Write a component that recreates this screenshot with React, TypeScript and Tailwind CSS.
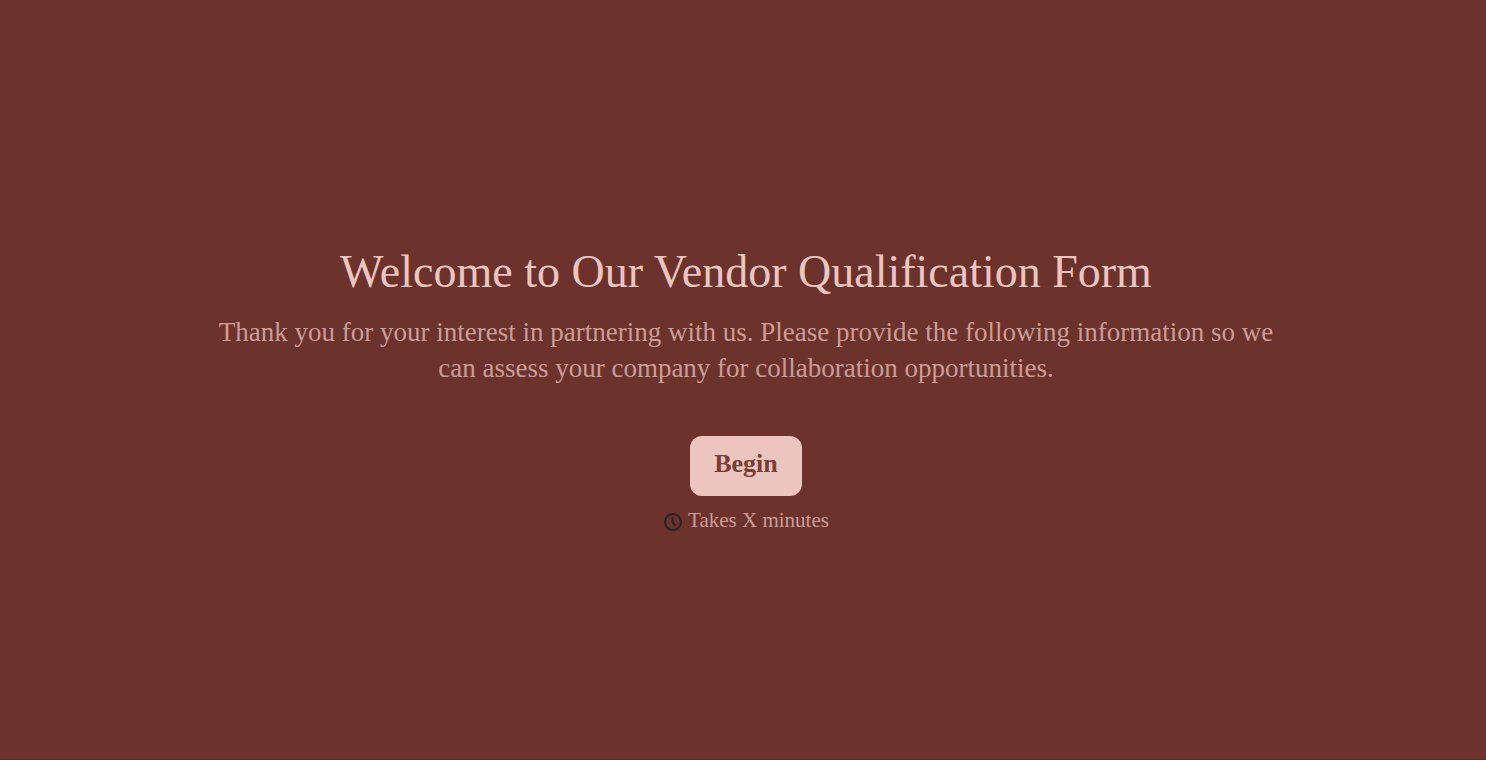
import React from 'react';

const App: React.FC = () => {
  return (
    <main className="flex min-h-screen flex-col items-center justify-center border-b border-[#602c27] bg-[#6c332c] pl-[6px] pt-4 text-center font-['Liberation_Serif',serif]">
      <h1 className="px-6 text-[46px] leading-[56px] text-[#edc5bf]">Welcome to Our Vendor Qualification Form</h1>
      <p className="mt-[14px] max-w-[1088px] text-[27px] leading-9 text-[#cb9d97]">
        Thank you for your interest in partnering with us. Please provide the following information so we can assess your
        company for collaboration opportunities.
      </p>
      <button
        type="button"
        className="mt-[50px] h-[60px] rounded-xl bg-[#edc5bf] px-6 pb-1 text-[26px] font-bold text-[#7b3f37]"
      >
        Begin
      </button>
      <div className="mt-3 flex items-end gap-[5px]">
        <svg
          className="h-5 w-5 text-[#262627]"
          viewBox="0 0 20 20"
          fill="none"
          stroke="currentColor"
          strokeWidth="2.2"
          strokeLinecap="round"
          aria-hidden="true"
        >
          <circle cx="10" cy="10" r="8" />
          <path d="M9.6 6v4.2l2.2 2.8" />
        </svg>
        <span className="text-[21px] leading-6 text-[#cb9d97]">Takes X minutes</span>
      </div>
    </main>
  );
};

export default App;
